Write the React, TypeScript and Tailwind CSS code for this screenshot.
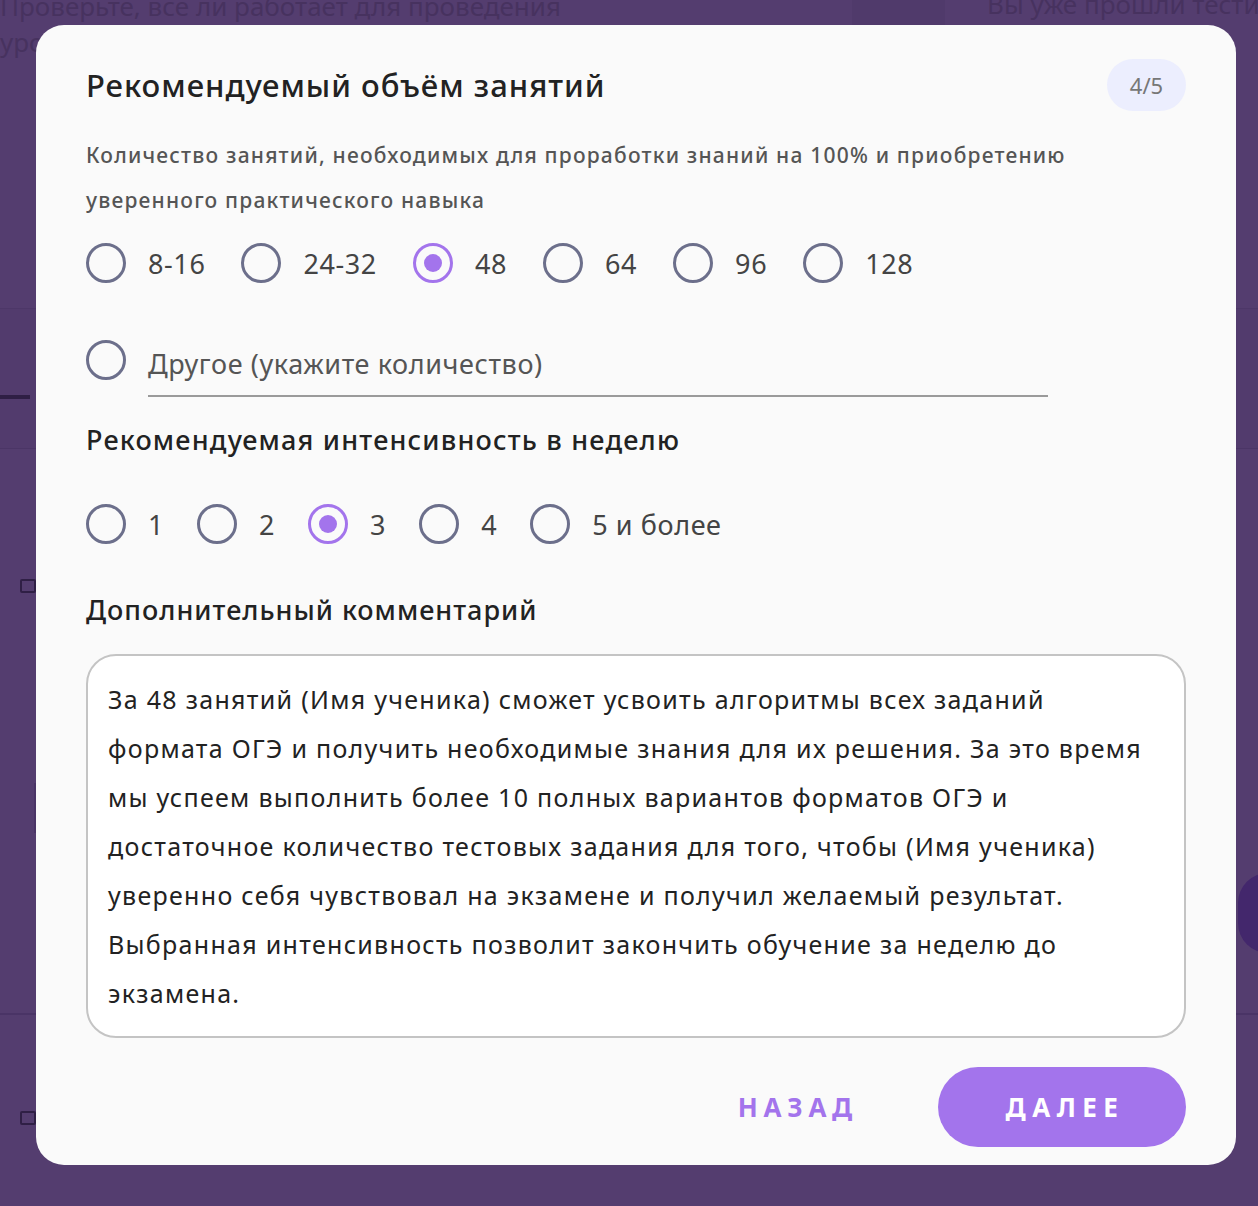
import React, { useState } from 'react';

const font = { fontFamily: '"Noto Sans", "Open Sans", sans-serif' };

function Radio({ checked, label, onClick }: { checked: boolean; label: string; onClick?: () => void }) {
    return (
        <button type="button" onClick={onClick} className="flex items-center gap-[22px]">
            <span
                className={
                    checked
                        ? 'flex h-[40px] w-[40px] items-center justify-center rounded-full border-[3px] border-[#a374ec]'
                        : 'flex h-[40px] w-[40px] items-center justify-center rounded-full border-[3px] border-[#6c6f8b]'
                }
            >
                {checked && <span className="h-[18px] w-[18px] rounded-full bg-[#a374ec]" />}
            </span>
            {label && <span className="text-[27px] leading-none tracking-[0.6px] text-[#444]">{label}</span>}
        </button>
    );
}

function Background() {
    return (
        <div className="absolute inset-0 overflow-hidden bg-[#543d6f] text-[#47325f]">
            <div className="flex h-[308px]">
                <div className="-mt-[12px] w-[852px] shrink-0 text-[26px] leading-[36px]">
                    <p>Проверьте, все ли работает для проведения</p>
                    <p>урока</p>
                </div>
                <div className="h-[25px] w-[93px] shrink-0 bg-[#503a6b]" />
                <div className="-mt-[12px] shrink-0 pl-[42px] text-[26px] leading-[32px]">
                    <p>Вы уже прошли тести</p>
                    <p>и можете начать</p>
                    <p>урок по</p>
                    <p>после</p>
                </div>
            </div>
            <div className="h-[140px] border-t border-[#4d3768] bg-[#523b6d]">
                <div className="mt-[86px] h-[4px] w-[30px] bg-[#2f1f45]" />
            </div>
            <div className="h-[565px] border-t border-[#4b3566]">
                <div className="ml-[20px] mt-[130px] h-[14px] w-[16px] rounded-[2px] border-2 border-[#2f1f45]" />
                <div className="ml-[34px] mt-[190px] h-[50px] w-[3px] bg-[#4a3466]" />
                <div className="ml-auto mt-[40px] h-[80px] w-[60px] translate-x-[40px] rounded-full bg-[#43276c]" />
            </div>
            <div className="border-t-2 border-[#4a3466]">
                <div className="ml-[20px] mt-[96px] h-[14px] w-[16px] rounded-[2px] border-2 border-[#2f1f45]" />
            </div>
        </div>
    );
}

export default function App() {
    const [amount, setAmount] = useState('48');
    const [intensity, setIntensity] = useState('3');

    const amounts = ['8-16', '24-32', '48', '64', '96', '128'];
    const intensities = ['1', '2', '3', '4', '5 и более'];

    return (
        <div className="relative h-[1206px] w-full overflow-hidden" style={font}>
            <Background />
            <div className="absolute left-[36px] top-[25px] flex h-[1140px] w-[1200px] flex-col rounded-[28px] bg-[#fafafa] px-[50px] pt-[34px]">
                <div className="flex items-center justify-between">
                    <h1 className="text-[31px] font-medium leading-[52px] tracking-[1px] text-[#222]">
                        Рекомендуемый объём занятий
                    </h1>
                    <span className="flex h-[52px] w-[79px] items-center justify-center rounded-full bg-[#eceefe] text-[22px] text-[#777]">
                        4/5
                    </span>
                </div>

                <p className="mt-[22px] text-[21px] font-medium leading-[45px] tracking-[1.2px] text-[#555]">
                    Количество занятий, необходимых для проработки знаний на 100% и приобретению
                    <br />
                    уверенного практического навыка
                </p>

                <div className="mt-[20px] flex items-center gap-[36px]">
                    {amounts.map((a) => (
                        <Radio key={a} label={a} checked={amount === a} onClick={() => setAmount(a)} />
                    ))}
                </div>

                <div className="mt-[57px] flex items-start gap-[22px]">
                    <Radio label="" checked={amount === 'other'} onClick={() => setAmount('other')} />
                    <div className="w-[900px] border-b-2 border-[#9a9a9a] pb-[14px] pt-[7px] text-[27px] leading-[34px] tracking-[0.6px] text-[#555]">
                        Другое (укажите количество)
                    </div>
                </div>

                <h2 className="mt-[25px] text-[27px] font-medium leading-[36px] tracking-[1.2px] text-[#222]">
                    Рекомендуемая интенсивность в неделю
                </h2>

                <div className="mt-[46px] flex items-center gap-[33px]">
                    {intensities.map((i) => (
                        <Radio key={i} label={i} checked={intensity === i} onClick={() => setIntensity(i)} />
                    ))}
                </div>

                <h2 className="mt-[48px] text-[27px] font-medium leading-[36px] tracking-[1px] text-[#222]">
                    Дополнительный комментарий
                </h2>

                <div className="mt-[26px] h-[384px] rounded-[30px] border-2 border-[#c4c4c4] bg-white px-[20px] pt-[19px] text-[25px] leading-[49px] tracking-[1.3px] text-[#222]">
                    За 48 занятий (Имя ученика) сможет усвоить алгоритмы всех заданий
                    <br />
                    формата ОГЭ и получить необходимые знания для их решения. За это время
                    <br />
                    мы успеем выполнить более 10 полных вариантов форматов ОГЭ и
                    <br />
                    достаточное количество тестовых задания для того, чтобы (Имя ученика)
                    <br />
                    уверенно себя чувствовал на экзамене и получил желаемый результат.
                    <br />
                    Выбранная интенсивность позволит закончить обучение за неделю до
                    <br />
                    экзамена.
                </div>

                <div className="mt-[29px] flex items-center justify-end gap-[80px]">
                    <button type="button" className="text-[26px] font-bold tracking-[0.22em] text-[#a374ec]">
                        НАЗАД
                    </button>
                    <button
                        type="button"
                        className="h-[80px] w-[248px] rounded-full bg-[#a374ec] pl-[6px] text-[26px] font-bold tracking-[0.25em] text-white"
                    >
                        ДАЛЕЕ
                    </button>
                </div>
            </div>
        </div>
    );
}
